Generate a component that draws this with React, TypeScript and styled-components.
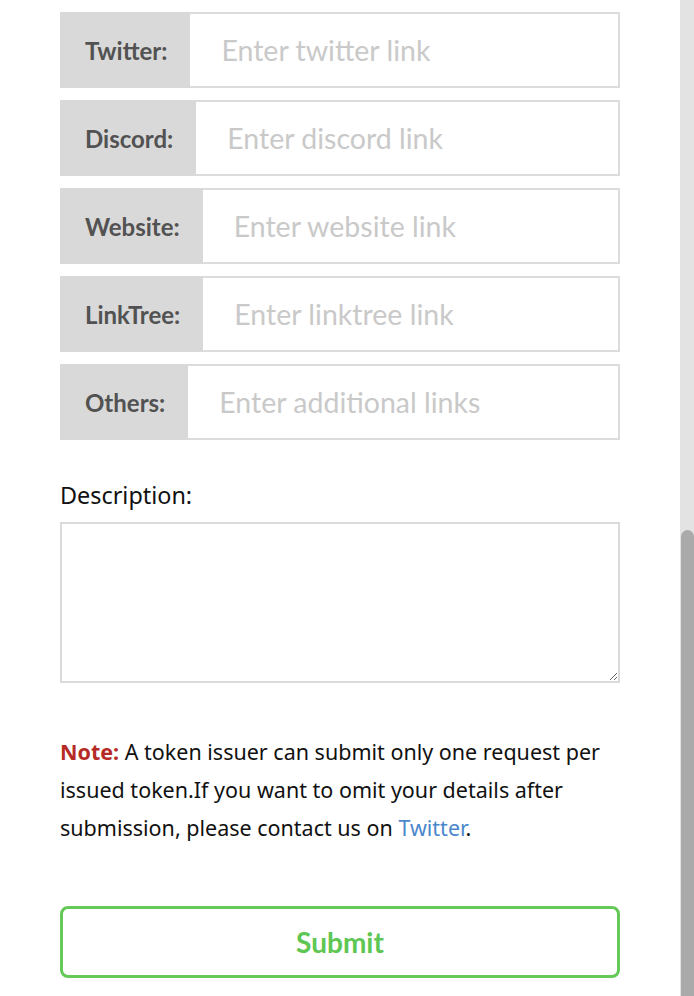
import React from "react";
import styled, { createGlobalStyle } from "styled-components";

const GlobalStyle = createGlobalStyle`
  html, body {
    margin: 0;
    padding: 0;
    background: #ffffff;
    overflow: hidden;
  }
`;

// Página completa: formulario + barra de scroll lateral
const Page = styled.div`
  display: flex;
  height: 996px;
`;

const Main = styled.main`
  flex: 1;
  padding: 12px 60px 0 60px;
  display: flex;
  flex-direction: column;
`;

const LinkList = styled.div`
  display: flex;
  flex-direction: column;
  gap: 12px;
`;

const LinkRow = styled.div`
  display: flex;
  height: 76px;
`;

const RowLabel = styled.label`
  display: flex;
  align-items: center;
  background: #d9d9d9;
  padding: 0 23px 0 25px;
  font-family: Lato, "Liberation Sans", sans-serif;
  font-weight: 700;
  font-size: 24px;
  color: #525252;
  white-space: nowrap;
`;

const LinkInput = styled.input`
  flex: 1;
  min-width: 0;
  border: 2px solid #dcdcdc;
  border-left: 0;
  padding: 0 0 0 31px;
  font-family: Lato, "Liberation Sans", sans-serif;
  font-size: 28.5px;
  color: #333;
  background: #ffffff;
  outline: none;

  &::placeholder {
    color: #c9c9c9;
  }
`;

const FieldLabel = styled.label`
  margin-top: 39px;
  font-family: "Noto Sans", "Liberation Sans", sans-serif;
  font-size: 23.4px;
  color: #111;
`;

const DescriptionBox = styled.textarea`
  margin-top: 11px;
  height: 161px;
  box-sizing: border-box;
  border: 2px solid #dadada;
  resize: vertical;
  outline: none;
  font-family: "Noto Sans", sans-serif;
  font-size: 18px;
`;

const NoteText = styled.p`
  margin: 50px 0 0 0;
  font-family: "Noto Sans", "Liberation Sans", sans-serif;
  font-size: 21.5px;
  line-height: 38px;
  color: #111;
`;

const NoteTag = styled.span`
  color: #b52a25;
  font-weight: 700;
`;

const TextLink = styled.a`
  color: #4a87cc;
  text-decoration: none;
`;

const SubmitButton = styled.button`
  margin-top: 59px;
  height: 72px;
  border: 3px solid #64c957;
  border-radius: 8px;
  background: #ffffff;
  color: #5ec653;
  font-family: Lato, "Liberation Sans", sans-serif;
  font-weight: 700;
  font-size: 28px;
  cursor: pointer;
`;

// Barra de scroll dibujada
const ScrollTrack = styled.div`
  width: 14px;
  background: #e3e3e3;
  display: flex;
  flex-direction: column;
`;

const ScrollThumb = styled.div`
  margin-top: 530px;
  margin-left: 1px;
  flex: 1;
  background: #aaaaaa;
  border-radius: 7px 7px 0 0;
`;

const links = [
  { label: "Twitter:", placeholder: "Enter twitter link" },
  { label: "Discord:", placeholder: "Enter discord link" },
  { label: "Website:", placeholder: "Enter website link" },
  { label: "LinkTree:", placeholder: "Enter linktree link" },
  { label: "Others:", placeholder: "Enter additional links" },
];

export default function App() {
  return (
    <>
      <GlobalStyle />
      <Page>
        <Main>
          <LinkList>
            {links.map((l) => (
              <LinkRow key={l.label}>
                <RowLabel>{l.label}</RowLabel>
                <LinkInput placeholder={l.placeholder} />
              </LinkRow>
            ))}
          </LinkList>
          <FieldLabel>Description:</FieldLabel>
          <DescriptionBox />
          <NoteText>
            <NoteTag>Note:</NoteTag> A token issuer can submit only one request per
            issued token.If you want to omit your details after submission, please
            contact us on <TextLink href="#">Twitter</TextLink>.
          </NoteText>
          <SubmitButton>Submit</SubmitButton>
        </Main>
        <ScrollTrack>
          <ScrollThumb />
        </ScrollTrack>
      </Page>
    </>
  );
}
